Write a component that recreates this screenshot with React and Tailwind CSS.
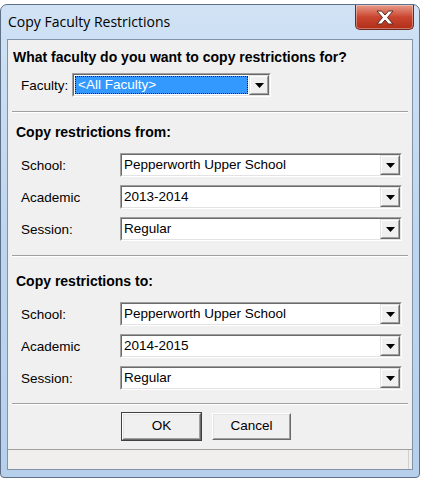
import React from 'react';

const sans = { fontFamily: '"Liberation Sans", Arial, sans-serif' };

const Arrow = () => (
  <svg width="9" height="5" viewBox="0 0 9 5">
    <path d="M0 0h9L4.5 5z" fill="#000" />
  </svg>
);

const DropButton = () => (
  <div className="w-[20px] h-full border border-t-[#e3e3e3] border-l-[#e3e3e3] border-b-[#696969] border-r-[#696969]">
    <div className="h-full flex items-center justify-center bg-[#f0f0f0] border border-t-white border-l-white border-b-[#a0a0a0] border-r-[#a0a0a0]">
      <Arrow />
    </div>
  </div>
);

const Combo = ({ value, width, selected }) => (
  <div
    className={`${width} h-[24px] border border-t-[#a0a0a0] border-l-[#a0a0a0] border-b-white border-r-white`}
  >
    <div className="h-full flex bg-white border border-t-[#696969] border-l-[#696969] border-b-[#e3e3e3] border-r-[#e3e3e3]">
      {selected ? (
        <div className="flex-1 flex items-center m-px bg-[#3399ff] border border-dotted border-[#1a1a1a] pl-[2px] text-white">
          {value}
        </div>
      ) : (
        <div className="flex-1 flex items-center pl-[2px] text-black">{value}</div>
      )}
      <DropButton />
    </div>
  </div>
);

const Row = ({ label, value }) => (
  <div className="flex items-center h-[24px] mb-[8px]">
    <span className="w-[112px] pl-[13px] pt-[2px]">{label}</span>
    <Combo value={value} width="w-[282px]" />
  </div>
);

const Separator = () => (
  <div className="mx-[4px] h-[2px] border-t border-t-[#a0a0a0] border-b border-b-white" />
);

const Section = ({ title, rows, top }) => (
  <div>
    <div className={`pl-[8px] h-[20px] ${top} mb-[11px] flex items-center font-bold text-[14px]`}>
      {title}
    </div>
    {rows.map((r) => (
      <Row key={r.label} label={r.label} value={r.value} />
    ))}
  </div>
);

const Button = ({ children, isDefault }) => (
  <div
    className={`w-[81px] h-[29px] ${isDefault ? 'border border-[#404040]' : 'border border-transparent'}`}
  >
    <div className="h-full border border-t-white border-l-white border-b-[#696969] border-r-[#696969]">
      <div className="h-full flex items-center justify-center bg-[#f0f0f0] border border-t-[#e3e3e3] border-l-[#e3e3e3] border-b-[#a0a0a0] border-r-[#a0a0a0]">
        {children}
      </div>
    </div>
  </div>
);

const CloseButton = () => (
  <div className="w-[59px] h-[25px] rounded-b-[5px] border border-t-0 border-[#6f2a20] bg-gradient-to-b from-[#e69a8a] via-[#c9452f] to-[#b02e18] flex items-center justify-center shadow-[inset_0_0_0_1px_rgba(255,255,255,0.35)]">
    <svg width="20" height="15" viewBox="0 0 20 15">
      <path
        d="M2 1h4.5L10 5l3.5-4H18l-5.5 6.5L18 14h-4.5L10 10l-3.5 4H2l5.5-6.5z"
        fill="#fff"
        stroke="#5a2a22"
        strokeWidth="1"
        strokeLinejoin="round"
      />
    </svg>
  </div>
);

export default function App() {
  return (
    <div className="w-[422px] h-[479px] bg-white pt-[4px] overflow-hidden">
      <div className="w-[420px] h-[474px] rounded-t-[7px] rounded-b-[4px] border border-[#5d7088] bg-gradient-to-b from-[#d0e2f4] via-[#bdd5ef] to-[#b6d0ec] flex flex-col">
        <div className="h-[34px] flex justify-between">
          <span
            className="pl-[7px] pt-[8px] text-[14px] leading-[18px] text-black"
            style={{ fontFamily: '"Open Sans", "Noto Sans", sans-serif' }}
          >
            Copy Faculty Restrictions
          </span>
          <div className="mr-[5px]">
            <CloseButton />
          </div>
        </div>
        <div
          className="mx-[6px] flex-1 flex flex-col border border-[#8193a8] bg-[#f0f0f0] text-[13.5px] text-black"
          style={sans}
        >
          <div className="pl-[5px] pt-[9px] h-[17px] box-content font-bold text-[14px] leading-[17px]">
            What faculty do you want to copy restrictions for?
          </div>
          <div className="flex items-center mt-[7px] mb-[14px] h-[24px]">
            <span className="pl-[13px] w-[64px] pt-[2px]">Faculty:</span>
            <Combo value="<All Faculty>" width="w-[199px]" selected />
          </div>
          <Separator />
          <Section
            top="mt-[9px]"
            title="Copy restrictions from:"
            rows={[
              { label: 'School:', value: 'Pepperworth Upper School' },
              { label: 'Academic', value: '2013-2014' },
              { label: 'Session:', value: 'Regular' },
            ]}
          />
          <div className="mt-[6px]">
            <Separator />
          </div>
          <Section
            top="mt-[14px]"
            title="Copy restrictions to:"
            rows={[
              { label: 'School:', value: 'Pepperworth Upper School' },
              { label: 'Academic', value: '2014-2015' },
              { label: 'Session:', value: 'Regular' },
            ]}
          />
          <div className="mt-[5px]">
            <Separator />
          </div>
          <div className="flex gap-[9px] pl-[113px] mt-[7px]">
            <Button isDefault>OK</Button>
            <Button>Cancel</Button>
          </div>
          <div className="mt-auto h-[20px] border-t border-t-[#a0a0a0] bg-[#f1efed] flex justify-end">
            <div className="w-[4px] border-l border-l-[#d0d0d0]" />
          </div>
        </div>
        <div className="h-[7px]" />
      </div>
    </div>
  );
}
